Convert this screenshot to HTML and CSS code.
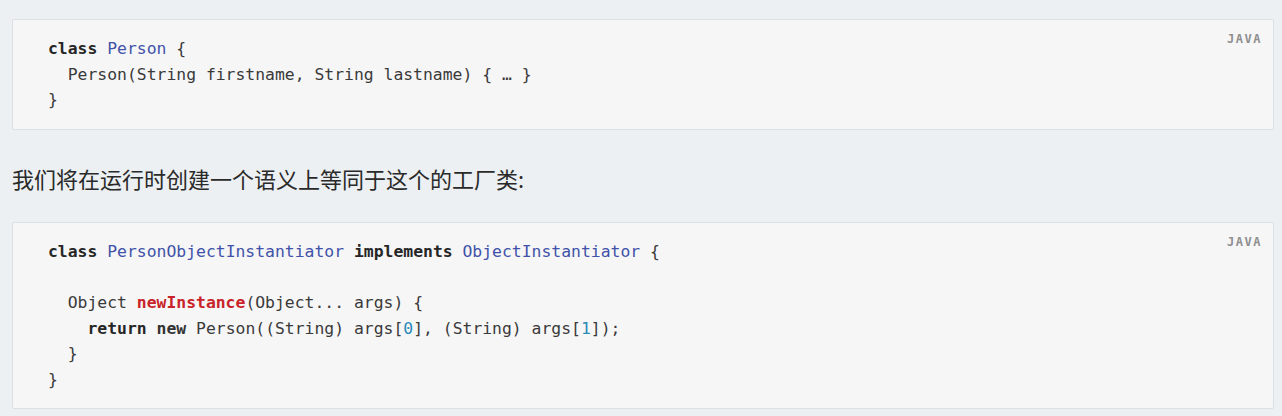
FILE: index.html
```html
<!DOCTYPE html>
<html lang="zh">
<head>
<meta charset="utf-8">
<title>Java code</title>
<link rel="stylesheet" href="styles.css">
</head>
<body>
<div class="code-block">
<span class="lang">JAVA</span>
<div class="code">
<div class="line"><span class="kw">class</span> <span class="cls">Person</span> {</div>
<div class="line">  Person(String firstname, String lastname) { … }</div>
<div class="line">}</div>
</div>
</div>
<p class="text">我们将在运行时创建一个语义上等同于这个的工厂类:</p>
<div class="code-block">
<span class="lang">JAVA</span>
<div class="code">
<div class="line"><span class="kw">class</span> <span class="cls">PersonObjectInstantiator</span> <span class="kw">implements</span> <span class="cls">ObjectInstantiator</span> {</div>
<div class="line"></div>
<div class="line">  Object <span class="fn">newInstance</span>(Object... args) {</div>
<div class="line">    <span class="kw">return</span> <span class="kw2">new</span> Person((String) args[<span class="num">0</span>], (String) args[<span class="num">1</span>]);</div>
<div class="line">  }</div>
<div class="line">}</div>
</div>
</div>
</body>
</html>
```
FILE: styles.css
```css
html, body {
  margin: 0;
  background: #ecf0f2;
}
body {
  padding: 19px 8px 0 12px;
  height: 416px;
  box-sizing: border-box;
  overflow: hidden;
}
.code-block {
  position: relative;
  background: #f6f6f7;
  border: 1px solid #dbe0e3;
  border-radius: 2px;
}
.code {
  padding: 16px 35px;
  font-family: "DejaVu Sans Mono", "Liberation Mono", monospace;
  font-size: 16.4px;
  line-height: 25.5px;
  color: #3a3a3a;
}
.line {
  white-space: pre;
  height: 25.5px;
}
.kw {
  color: #262626;
  font-weight: bold;
}
.kw2 {
  color: #333;
  font-weight: 600;
}
.cls {
  color: #4152a8;
}
.fn {
  color: #c9232a;
  font-weight: bold;
}
.num {
  color: #2a8bb8;
}
.lang {
  position: absolute;
  top: 12px;
  right: 11px;
  font-family: "DejaVu Sans Mono", monospace;
  font-size: 12px;
  line-height: 14px;
  font-weight: bold;
  letter-spacing: 1.5px;
  color: #8f8f8f;
}
.text {
  margin: 33.5px 0 29px;
  font-family: "Noto Sans CJK SC", "Noto Sans", sans-serif;
  font-size: 22px;
  line-height: 30px;
  color: #2a2a2a;
}
```
